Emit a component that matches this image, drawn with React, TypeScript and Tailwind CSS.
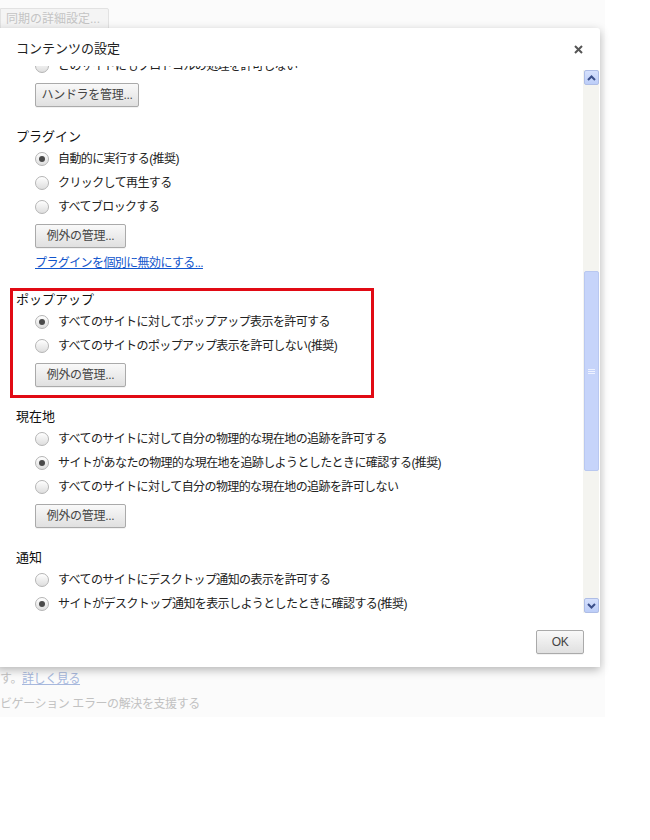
import React from 'react';

const FONT = "font-['Liberation_Sans','Noto_Sans_CJK_JP',sans-serif]";

function Radio({ checked, label }: { checked?: boolean; label: string }) {
    return (
        <div className="flex h-[24px] items-center pl-[19px]">
            <span className="flex h-[14px] w-[14px] shrink-0 items-center justify-center rounded-full border border-[#b4b4b4] bg-gradient-to-b from-[#fefefe] to-[#dedede] shadow-[inset_0_1px_1px_rgba(255,255,255,0.9)]">
                {checked && <span className="h-[6px] w-[6px] rounded-full bg-[#4a4a4a]" />}
            </span>
            <span className="ml-[9px] whitespace-nowrap text-[12px] tracking-[-0.6px] text-[#222]">{label}</span>
        </div>
    );
}

function Btn({ children, width }: { children: React.ReactNode; width: string }) {
    return (
        <button
            className={`flex h-[24px] ${width} items-center justify-center rounded-[2px] border border-[#aaaaaa] bg-gradient-to-b from-[#f9f9f9] to-[#e0e0e0] text-[12px] tracking-[-0.3px] text-[#444] shadow-[0_1px_0_rgba(0,0,0,0.05)]`}
        >
            {children}
        </button>
    );
}

function Heading({ children }: { children: React.ReactNode }) {
    return <div className="h-[20px] text-[13px] leading-[20px] text-[#111]">{children}</div>;
}

function Chevron({ up }: { up?: boolean }) {
    return (
        <div className="flex h-[15px] w-[15px] items-center justify-center rounded-[2px] border border-[#aebde6] bg-gradient-to-b from-[#d6e1fd] to-[#bccdf8]">
            <svg width="9" height="6" viewBox="0 0 9 6">
                <path
                    d={up ? 'M1 5 L4.5 1.5 L8 5' : 'M1 1 L4.5 4.5 L8 1'}
                    fill="none"
                    stroke="#3b4f8a"
                    strokeWidth="2"
                />
            </svg>
        </div>
    );
}

function Scrollbar() {
    return (
        <div className="mr-[1px] mt-[4px] flex h-[543px] w-[16px] flex-col items-center bg-[#f4f4f0]">
            <Chevron up />
            <div className="mt-[186px] flex h-[200px] w-[15px] items-center justify-center rounded-[2px] border border-[#b9c8f0] bg-[#c6d4fa]">
                <div className="flex flex-col gap-[1px]">
                    <span className="h-[1px] w-[7px] bg-[#eef2ff]" />
                    <span className="h-[1px] w-[7px] bg-[#eef2ff]" />
                    <span className="h-[1px] w-[7px] bg-[#eef2ff]" />
                </div>
            </div>
            <div className="mt-auto">
                <Chevron />
            </div>
        </div>
    );
}

export default function App() {
    return (
        <div className={`relative h-[840px] w-[650px] overflow-hidden bg-white ${FONT}`}>
            {/* faded settings page behind the dialog */}
            <div className="flex h-[717px] w-[605px] flex-col bg-[#fbfbfb]">
                <div className="mt-[8px] flex h-[22px] w-[109px] items-center rounded-r-[2px] border border-[#e2e2e2] bg-[#f4f4f4] pl-[5px] text-[12px] text-[#c4c4c4]">
                    同期の詳細設定...
                </div>
                <div className="mt-auto flex flex-col text-[12px] tracking-[-0.4px] text-[#c2c2c2]">
                    <div className="h-[25px] leading-[25px]">
                        す。<span className="text-[#a7b8dd] underline">詳しく見る</span>
                    </div>
                    <div className="h-[25px] leading-[25px]">ビゲーション エラーの解決を支援する</div>
                </div>
            </div>

            {/* dialog */}
            <div className="absolute left-[-4px] top-[28px] flex h-[639px] w-[604px] flex-col rounded-tr-[3px] bg-white shadow-[0_3px_10px_rgba(0,0,0,0.28)]">
                <div className="flex h-[38px] items-center justify-between pl-[20px] pr-[17px] pt-[4px]">
                    <span className="text-[13px] text-[#222]">コンテンツの設定</span>
                    <svg width="9" height="9" viewBox="0 0 9 9">
                        <path d="M1 1 L8 8 M8 1 L1 8" stroke="#555" strokeWidth="2" />
                    </svg>
                </div>

                <div className="flex h-[549px]">
                    <div className="flex-1 overflow-hidden pl-[20px]">
                        <div className="mt-[-12px] flex flex-col">
                            <Radio label="どのサイトにもプロトコルの処理を許可しない" />
                            <div className="mt-[5px] pl-[19px]">
                                <Btn width="w-[104px]">ハンドラを管理...</Btn>
                            </div>

                            <div className="mt-[20px]">
                                <Heading>プラグイン</Heading>
                                <Radio checked label="自動的に実行する(推奨)" />
                                <Radio label="クリックして再生する" />
                                <Radio label="すべてブロックする" />
                                <div className="mt-[5px] pl-[19px]">
                                    <Btn width="w-[91px]">例外の管理...</Btn>
                                </div>
                                <div className="mt-[7px] h-[16px] pl-[19px] text-[12px] leading-[16px] tracking-[-0.6px] text-[#1155cc] underline">
                                    プラグインを個別に無効にする...
                                </div>
                            </div>

                            <div className="relative mt-[19px]">
                                <Heading>ポップアップ</Heading>
                                <Radio checked label="すべてのサイトに対してポップアップ表示を許可する" />
                                <Radio label="すべてのサイトのポップアップ表示を許可しない(推奨)" />
                                <div className="mt-[5px] pl-[19px]">
                                    <Btn width="w-[91px]">例外の管理...</Btn>
                                </div>
                                <div className="pointer-events-none absolute left-[-6px] top-[-2px] h-[110px] w-[364px] border-[3px] border-[#e10a14]" />
                            </div>

                            <div className="mt-[20px]">
                                <Heading>現在地</Heading>
                                <Radio label="すべてのサイトに対して自分の物理的な現在地の追跡を許可する" />
                                <Radio checked label="サイトがあなたの物理的な現在地を追跡しようとしたときに確認する(推奨)" />
                                <Radio label="すべてのサイトに対して自分の物理的な現在地の追跡を許可しない" />
                                <div className="mt-[5px] pl-[19px]">
                                    <Btn width="w-[91px]">例外の管理...</Btn>
                                </div>
                            </div>

                            <div className="mt-[20px]">
                                <Heading>通知</Heading>
                                <Radio label="すべてのサイトにデスクトップ通知の表示を許可する" />
                                <Radio checked label="サイトがデスクトップ通知を表示しようとしたときに確認する(推奨)" />
                            </div>
                        </div>
                    </div>
                    <Scrollbar />
                </div>

                <div className="flex h-[52px] items-center justify-end pr-[16px] pt-[2px]">
                    <Btn width="w-[48px]">OK</Btn>
                </div>
            </div>
        </div>
    );
}
